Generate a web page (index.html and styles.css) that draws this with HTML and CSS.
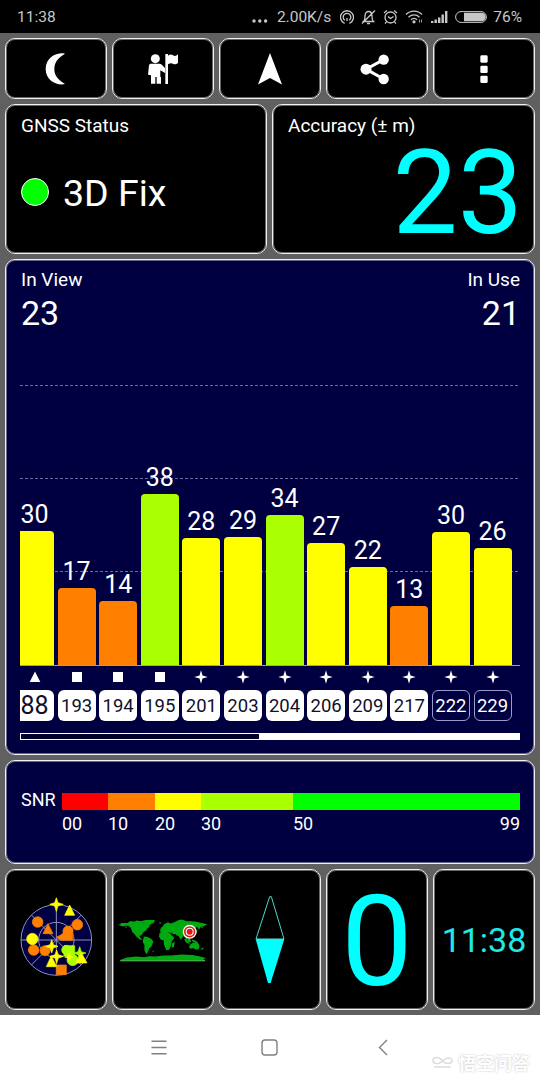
FILE: index.html
```html
<!DOCTYPE html>
<html lang="en">
<head>
  <meta charset="UTF-8">
  <meta name="viewport" content="width=device-width, initial-scale=1">
  <title>GNSS Status</title>
  <link rel="stylesheet" href="styles.css">
</head>

<body>

  <!-- Status bar -->
  <div class="status-bar">
    <span class="clock">11:38</span>
    <div class="status-right">
      <svg class="dots" width="16" height="4" viewBox="0 0 16 4"><circle cx="2" cy="2" r="1.7"/><circle cx="7.8" cy="2" r="1.7"/><circle cx="13.6" cy="2" r="1.7"/></svg>
      <span class="speed">2.00K/s</span>
      <svg class="line" width="14" height="16" viewBox="0 0 14 16"><path d="M4.600 14.300a6.500 6.500 0 1 1 4.800 0M4.800 11.300a3.800 3.800 0 1 1 4.400 0"/><path d="M7 9v3"/></svg>
      <svg class="line" width="15" height="16" viewBox="0 0 15 16"><path d="M1.500 12.500h12M3 12c1-1.500 1-3 1-5 0-3 1.500-4.500 3.500-4.500S11 4 11 7s0 3.500 1 5M6 14.500h3M14 1.500L1 14.500"/></svg>
      <svg class="line" width="15" height="16" viewBox="0 0 15 16"><circle cx="7.500" cy="8.500" r="5.500"/><path d="M5 7.500l2.500 2 3-2M1 4l3-2.500M14 4l-3-2.500M3.500 13L2 14.500M11.500 13l1.500 1.500"/></svg>
      <svg class="line wifi" width="18" height="15" viewBox="0 0 18 15"><path d="M1 5.500c4.500-4.500 11.500-4.500 16 0M3.500 8.200c3.200-3 7.800-3 11 0M6 10.700c1.800-1.600 4.200-1.600 6 0"/><circle class="fill" cx="9" cy="12.800" r="1"/><path class="thin" d="M14.500 10.500v3M16.500 10.500v3"/></svg>
      <svg class="signal" width="17" height="12" viewBox="0 0 17 12"><path d="M0 10h2.400v2H0zM3.500 8.500h2.400V12H3.500zM7 6.500h2.400V12H7zM10.500 3.500h2.400V12h-2.400zM14 0h2.400v12H14z"/></svg>
      <svg class="battery" width="33" height="12" viewBox="0 0 33 12"><rect x=".6" y=".6" width="30.800" height="10.800" rx="5.400"/><path d="M9 1.800h17.500a4.200 4.200 0 0 1 0 8.400H9z"/><path d="M32.300 4v4"/></svg>
      <span class="percent">76%</span>
    </div>
  </div>

  <!-- Dashboard -->
  <div class="dashboard">

    <div class="row toolbar">
      <button class="panel tool" aria-label="Night mode">
        <svg viewBox="108 147 120 120"><path d="M195 161C174 156 137 170 137 207C137 244 174 258 195 252C172 238 163 225 163 207C163 189 172 174 195 161Z"/></svg>
      </button>
      <button class="panel tool" aria-label="Waypoint">
        <svg viewBox="429 147 120 120"><circle cx="466" cy="176" r="13.500"/><path d="M452 191h26q5 0 8 4l9 9v15l-14-8v20h2v20h-13v-20h-4v20h-13v-25l-9-2 3-28q1-5 5-5z"/><path d="M496 162h8v90h-8zM504 167q8-6 15-1t15-3v26q-8 6-15 2t-15 2z"/></svg>
      </button>
      <button class="panel tool" aria-label="Navigate">
        <svg viewBox="250 49 40 40"><path d="M270 53l12 31.500-12-6.500-12 6.500z"/></svg>
      </button>
      <button class="panel tool" aria-label="Share">
        <svg viewBox="261 147 120 120"><path class="link" d="M341 179l-53 28.500 53 29.500"/><circle cx="341" cy="179" r="15.500"/><circle cx="288" cy="207.500" r="16.500"/><circle cx="341" cy="237" r="15.500"/></svg>
      </button>
      <button class="panel tool" aria-label="Menu">
        <svg viewBox="582 147 120 120"><rect x="631" y="166" width="22" height="22" rx="4"/><rect x="631" y="197" width="22" height="22" rx="4"/><rect x="631" y="227" width="22" height="22" rx="4"/></svg>
      </button>
    </div>

    <div class="row summary">
      <div class="panel fix">
        <div class="label">GNSS Status</div>
        <div class="fix-state"><span class="led"></span>3D Fix</div>
      </div>
      <div class="panel accuracy">
        <div class="label">Accuracy (± m)</div>
        <div class="accuracy-value">23</div>
      </div>
    </div>

    <!-- Satellites -->
    <div class="panel blue satellites">
      <div class="counts">
        <div><div class="label">In View</div><div class="count">23</div></div>
        <div class="in-use"><div class="label">In Use</div><div class="count">21</div></div>
      </div>

      <div class="chart">
        <div class="grid"><i></i><i></i><i></i></div>
        <div class="bars">
          <div class="sat first"><b>30</b><div class="bar yellow" style="height:134px"></div></div>
          <div class="sat"><b>17</b><div class="bar orange" style="height:77px"></div></div>
          <div class="sat"><b>14</b><div class="bar orange" style="height:64px"></div></div>
          <div class="sat"><b>38</b><div class="bar lime" style="height:171px"></div></div>
          <div class="sat"><b>28</b><div class="bar yellow" style="height:127.500px"></div></div>
          <div class="sat"><b>29</b><div class="bar yellow" style="height:128.500px"></div></div>
          <div class="sat"><b>34</b><div class="bar lime" style="height:150.500px"></div></div>
          <div class="sat"><b>27</b><div class="bar yellow" style="height:122px"></div></div>
          <div class="sat"><b>22</b><div class="bar yellow" style="height:98px"></div></div>
          <div class="sat"><b>13</b><div class="bar orange" style="height:59.500px"></div></div>
          <div class="sat"><b>30</b><div class="bar yellow" style="height:133px"></div></div>
          <div class="sat"><b>26</b><div class="bar yellow" style="height:117px"></div></div>
        </div>
      </div>

      <svg class="defs" width="0" height="0">
        <symbol id="triangle" viewBox="0 0 14 14"><path d="M7 1.500l5.300 10.500H1.700z"/></symbol>
        <symbol id="square" viewBox="0 0 14 14"><path d="M2 2h10v10H2z"/></symbol>
        <symbol id="star" viewBox="0 0 14 14"><path d="M7 .3L8.500 5.500 13.700 7 8.500 8.500 7 13.700 5.500 8.500 .3 7 5.500 5.500z"/></symbol>
      </svg>

      <div class="ids">
        <div class="sat-id first"><svg><use href="#triangle"/></svg><span class="big">88</span></div>
        <div class="sat-id"><svg><use href="#square"/></svg><span>193</span></div>
        <div class="sat-id"><svg><use href="#square"/></svg><span>194</span></div>
        <div class="sat-id"><svg><use href="#square"/></svg><span>195</span></div>
        <div class="sat-id"><svg><use href="#star"/></svg><span>201</span></div>
        <div class="sat-id"><svg><use href="#star"/></svg><span>203</span></div>
        <div class="sat-id"><svg><use href="#star"/></svg><span>204</span></div>
        <div class="sat-id"><svg><use href="#star"/></svg><span>206</span></div>
        <div class="sat-id"><svg><use href="#star"/></svg><span>209</span></div>
        <div class="sat-id"><svg><use href="#star"/></svg><span>217</span></div>
        <div class="sat-id unused"><svg><use href="#star"/></svg><span>222</span></div>
        <div class="sat-id unused"><svg><use href="#star"/></svg><span>229</span></div>
      </div>

      <div class="scrollbar"><div class="thumb"></div></div>
    </div>

    <!-- SNR legend -->
    <div class="panel blue snr">
      <span class="label">SNR</span>
      <div class="scale">
        <div class="red"></div><div class="orange"></div><div class="yellow"></div><div class="lime"></div><div class="green"></div>
        <span>00</span><span>10</span><span>20</span><span>30</span><span class="ends">50<em>99</em></span>
      </div>
    </div>

    <div class="row tiles">
      <div class="panel tile">
        <svg width="95" height="100" viewBox="-5 13 285 300">
          <g class="sky">
            <circle class="disc" cx="137" cy="163" r="106"/>
            <circle cx="137" cy="163" r="53"/>
            <path d="M31 163h212M137 57v212M62 88l150 150M62 238L212 88"/>
          </g>
          <g class="f-orange">
            <circle cx="81" cy="109" r="16"/><circle cx="200" cy="117" r="16"/><circle cx="69" cy="193" r="16"/><circle cx="103" cy="195" r="15"/>
            <path d="M112 114l15 30H97z"/><circle cx="172" cy="136" r="15"/><path d="M138 154l20-10 0-8 28-6v34h-36z"/><path d="M138 238h29v29h-29z"/>
          </g>
          <g class="f-lime">
            <path d="M160 180h32v31h-32z"/><circle cx="186" cy="223" r="17"/><path d="M207 183l5 15 14 4-14 5-5 16-5-16-14-5 14-4z"/><circle cx="167" cy="193" r="14"/>
          </g>
          <g class="f-yellow">
            <circle cx="65" cy="160" r="17"/><path d="M137 36l5 15 16 5-16 5-5 16-5-16-15-5 15-5z"/><path d="M177 58l15 31h-30z"/>
            <path d="M123 162l5 15 14 5-14 5-5 15-5-15-14-5 14-5z"/><path d="M122 210l16 33h-31z"/><path d="M138 193l5 14 15 5-15 5-5 16-5-16-15-5 15-5z"/><path d="M212 201l17 31h-34z"/><path d="M175 202l4 9 9 3-9 3-4 9-4-9-9-3 9-3z"/>
          </g>
        </svg>
      </div>
      <div class="panel tile">
        <svg width="94" height="56" viewBox="0 -1.500 282 168">
          <g class="land">
            <path d="M12 37l6-4 18 0 6-5 14 1 6-3 12 2 10 6 7-1 8 9-7 5-3 6-8 5-6 9-7 2 2 6 5 5-4-1-9-8-6-8-6-6-4-12-7-6-9-2-8 3z"/>
            <path d="M77 27l13-3 24 0-2 6-8 3-8 8-6-2-3-8z"/>
            <path d="M85 74l9 1 11 6 5 6-5 14-7 6-5 12-2 3-4-9 0-16-5-9z"/>
            <path d="M134 56l2-9 6-3 3-7 11-6 8 4 9-3 12-6 12-3 12 4 28 2 20 4 12 3-7 4-9 1-4 7-3-6-7 1-5 9-7 8-7 8-6 4-2 8-4-6-5-7-6 8-3 3-5-9-7-2-4-5-6 1-3-4-7 0-5-2-4 4z"/>
            <path d="M132 63l8-5 10 2 10 2 6 8 7 6-7 9-2 13-6 12-6 1-6-15-1-14-9-2-5-8z"/>
            <path d="M170 94l4-3-2 11-3 1zM223 98l9-6 6 1 5-3 6 10-2 8-7 2-6-5-9 2-4-3zM206 80l7 6 4 5-5-2zM216 80l6 1 1 6-5-1zM228 83l10 3 5 4-8-2zM233 66l3-8 5-4-2 8zM142 42l5-5 1 8-4 3z"/>
            <path d="M13 144l20-7 28-3 24 2 15-3 19 1 25-3 28-1 26-2 30 1 20 4 17 4-9 4 11 3H13z"/>
            <path d="M110 116l3 1M256 111l6-5M28 44l4-1M130 31l5 1M256 44l4 2"/>
          </g>
          <path class="coast" d="M13 145h254"/>
          <circle cx="221" cy="58" r="21" fill="#fff"/><circle cx="221" cy="58" r="17" fill="#e01818"/><circle cx="221" cy="58" r="12" fill="#fff"/><circle cx="221" cy="58" r="9" fill="#e01818"/>
        </svg>
      </div>
      <div class="panel tile">
        <svg class="compass" width="34" height="93" viewBox="129 99 102 279"><path class="needle-north" d="M179 110h5l38 127h-84z"/><path class="needle-south" d="M137 237h86l-41 132h-8z"/></svg>
      </div>
      <div class="panel tile heading">0</div>
      <div class="panel tile time">11:38</div>
    </div>
  </div>

  <!-- Navigation bar -->
  <div class="nav-bar">
    <svg width="16" height="15" viewBox="0 0 16 15"><path d="M.5 1.200h15M.5 7.500h15M.5 13.800h15"/></svg>
    <svg width="17" height="17" viewBox="0 0 17 17"><rect x="1" y="1" width="15" height="15" rx="3"/></svg>
    <svg width="10" height="17" viewBox="0 0 10 17"><path d="M9 1L1.500 8.500 9 16"/></svg>
    <div class="watermark">
      <svg width="23" height="16" viewBox="0 0 23 16"><path d="M3 13h17M11.500 7C8 2 2 3 2 6.500S8 11 11.500 7 21 3 21 6.500 15 11 11.500 7z"/></svg>
      <span>悟空问答</span>
    </div>
  </div>

</body>
</html>
```
FILE: styles.css
```css
* {
  box-sizing: border-box;
}

body {
  margin: 0;
  width: 540px;
  height: 1080px;
  overflow: hidden;
  background: #fff;
  color: #fff;
  font-family: Roboto, sans-serif;
}

/* Status bar */
.status-bar {
  height: 33px;
  padding: 0 18px 0 17px;
  display: flex;
  justify-content: space-between;
  align-items: center;
  background: #000;
  color: #c8c8c8;
  font-size: 15.5px;
}

.status-right {
  display: flex;
  align-items: center;
}

.status-right svg {
  margin-right: 7px;
  fill: #c8c8c8;
}

.status-right .dots {
  margin: 9px 9px 0 0;
}

.speed {
  margin-right: 9px;
}

.status-right .line {
  fill: none;
  stroke: #c8c8c8;
  stroke-width: 1.3;
}

.line .fill {
  fill: #c8c8c8;
}

.line .thin {
  stroke-width: 0.8;
}

.status-right .wifi {
  margin-right: 8px;
}

.status-right .battery {
  margin-right: 5px;
}

.battery rect {
  fill: none;
  stroke: #c8c8c8;
}

/* Dashboard */
.dashboard {
  height: 982px;
  padding: 5px;
  display: grid;
  grid-template-rows: 61px 150px 496px 104px 141px;
  gap: 5px;
  background: #606060;
}

.row {
  display: grid;
  grid-template-columns: repeat(5, 1fr);
  gap: 5px;
}

.summary {
  grid-template-columns: 262px 1fr;
}

.panel {
  min-width: 0;
  border: 1px solid #f0f0f0;
  border-radius: 10px;
  box-shadow: inset 0 0 0 1px rgba(255, 255, 255, 0.4);
  background: #000;
}

.blue {
  background: #000040;
}

.label {
  font-size: 19px;
  line-height: 22px;
}

.tool {
  display: flex;
  align-items: center;
  justify-content: center;
  padding: 0;
}

.tool svg {
  width: 40px;
  height: 40px;
  fill: #fff;
}

.link {
  fill: none;
  stroke: #fff;
  stroke-width: 9;
}

.fix,
.accuracy {
  padding: 10px 15px 0;
}

.fix-state {
  display: flex;
  align-items: center;
  margin-top: 34px;
  font-size: 37.5px;
  line-height: 44px;
}

.led {
  width: 28px;
  height: 28px;
  margin: -3px 14px 0 0;
  border: 1px solid #fff;
  border-radius: 50%;
  background: #00ff00;
}

.accuracy-value {
  margin: 11px -4px 0 0;
  text-align: right;
  font-size: 116px;
  line-height: 90px;
  color: #00ffff;
}

/* Satellites */
.satellites {
  padding: 9px 14px;
}

.counts {
  display: flex;
  justify-content: space-between;
  height: 70px;
  padding-left: 1px;
}

.count {
  font-size: 34px;
  line-height: 44px;
}

.in-use {
  text-align: right;
}

.chart {
  position: relative;
  height: 327px;
  border-bottom: 1px solid #9a9ac4;
}

.grid {
  position: absolute;
  top: 46px;
  left: 0;
  right: 2px;
}

.grid i {
  display: block;
  height: 93.2px;
  border-top: 1px dashed #6c6ca0;
}

.bars,
.ids {
  position: relative;
  display: flex;
  gap: 3.6px;
  height: 100%;
  overflow: hidden;
}

.sat {
  flex: none;
  width: 38px;
  display: flex;
  flex-direction: column;
  justify-content: flex-end;
  text-align: center;
}

.sat.first,
.sat-id.first {
  width: 34px;
}

.sat b {
  font-weight: normal;
  font-size: 25px;
  line-height: 30px;
  margin-bottom: 1px;
}

.sat.first b {
  margin-left: -5px;
}

.bar {
  border-radius: 4px 4px 0 0;
}

.first .bar {
  border-top-left-radius: 0;
}

.red { background: #ff0000; }
.orange { background: #ff8000; }
.yellow { background: #ffff00; }
.lime { background: #aaff00; }
.green { background: #00ff00; }

.defs {
  display: block;
}

.ids {
  height: 55px;
}

.sat-id {
  flex: none;
  width: 38px;
  text-align: center;
}

.sat-id svg {
  display: block;
  width: 14px;
  height: 14px;
  margin: 4px auto 6px;
  fill: #fff;
}

.sat-id.first svg {
  margin-left: 8px;
}

.sat-id span {
  display: block;
  height: 31px;
  border-radius: 6px;
  background: #fff;
  color: #10102c;
  font-size: 18.5px;
  line-height: 32px;
}

.sat-id .big {
  padding-right: 5px;
  border-radius: 0 6px 6px 0;
  font-size: 25px;
}

.sat-id.unused span {
  border: 1px solid #9a9ad0;
  background: none;
  color: #fff;
  line-height: 30px;
}

.scrollbar {
  height: 7px;
  margin-top: 12px;
  padding: 1px;
  background: #fff;
}

.thumb {
  width: 238px;
  height: 5px;
  background: #000028;
}

/* SNR legend */
.snr {
  display: flex;
  padding: 28px 14px 0 15px;
}

.snr .label {
  width: 41px;
  font-size: 18px;
}

.scale {
  flex: 1;
  display: grid;
  grid-template-columns: 46px 47px 46px 92px 1fr;
  grid-template-rows: 17px 28px;
  margin-top: 4px;
  font-size: 18px;
  line-height: 28px;
}

.ends {
  display: flex;
  justify-content: space-between;
}

.ends em {
  font-style: normal;
}

/* Bottom tiles */
.tile {
  display: flex;
  align-items: center;
  justify-content: center;
  color: #00ffff;
}

.sky {
  fill: none;
  stroke: #9090c0;
  stroke-width: 3;
}

.disc {
  fill: #000040;
}

.f-orange {
  fill: #ff8000;
  stroke: #ff8000;
}

.f-lime {
  fill: #aaff00;
  stroke: #aaff00;
}

.f-yellow {
  fill: #ffff00;
  stroke: #ffff00;
}

.f-orange,
.f-lime,
.f-yellow {
  stroke-width: 2;
}

.land {
  fill: #00aa10;
  stroke: #00aa10;
  stroke-width: 3.5;
}

.coast {
  stroke: #5fae5f;
  stroke-width: 3;
}

.needle-north {
  fill: none;
  stroke: #50d8c8;
  stroke-width: 3;
}

.needle-south {
  fill: #00ffff;
}

.heading {
  padding-top: 4px;
  font-size: 127px;
  line-height: 1;
}

.time {
  font-size: 34px;
  color: #20e8e8;
}

/* Navigation bar */
.nav-bar {
  height: 65px;
  position: relative;
  display: flex;
  align-items: center;
  padding-left: 151px;
}

.nav-bar > svg {
  fill: none;
  stroke: #808080;
  stroke-width: 1.4;
}

.nav-bar > svg + svg {
  margin-left: 94px;
}

.nav-bar > svg + svg + svg {
  margin-left: 100px;
}

.watermark {
  position: absolute;
  right: 10px;
  bottom: 8px;
  display: flex;
  align-items: center;
  gap: 4px;
  color: #fff;
  font: bold 18px/20px "Noto Sans CJK SC", sans-serif;
  text-shadow: 0 0 2px #bbb;
}

.watermark svg {
  fill: none;
  stroke: #ddd;
  stroke-width: 1.5;
}
```
